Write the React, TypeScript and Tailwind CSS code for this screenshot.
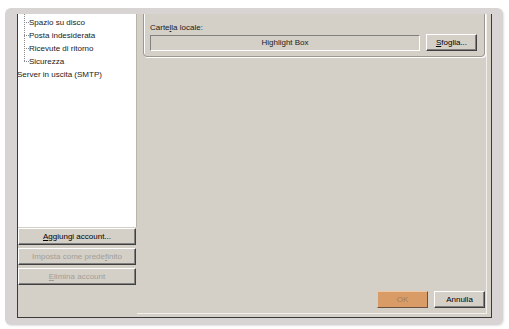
import React from 'react';

const btn =
  'h-[17px] flex items-center justify-center bg-[#d4d0c8] border border-t-white border-l-white border-b-[#404040] border-r-[#404040] shadow-[inset_-1px_-1px_0_#808080] text-[8px] leading-none';

const U = ({ c }: { c: string }) => <span className="underline underline-offset-1">{c}</span>;

export default function App() {
  const nested = ['Spazio su disco', 'Posta indesiderata', 'Ricevute di ritorno', 'Sicurezza'];
  return (
    <div className="w-[509px] h-[329px] bg-white pt-[8px] pl-[5px] font-['Liberation_Sans',Arial,sans-serif] text-[#1a1a1a]">
      <div className="w-[498px] h-[317px] rounded-[6px] bg-[#d9d4d4] pl-[12px] pt-[6px] shadow-[1px_1px_2px_rgba(0,0,0,0.12)]">
        <div className="w-[475px] h-[304px] bg-[#d4d0c8] border-x border-b border-[#3a3a3a] flex overflow-hidden">
          {/* left column: tree + account buttons */}
          <div className="w-[119px] flex flex-col">
            <div className="h-[213px] bg-white border-r border-[#b8b4ac] overflow-hidden">
              <div className="flex pl-[6px]">
                <svg width="5" height="54" className="shrink-0">
                  <line x1="0.5" y1="0" x2="0.5" y2="48" stroke="#8a8a8a" strokeDasharray="1 1" />
                  {[9, 22, 35, 48].map((y) => (
                    <line key={y} x1="0" y1={y - 0.5} x2="5" y2={y - 0.5} stroke="#8a8a8a" strokeDasharray="1 1" />
                  ))}
                </svg>
                <div className="flex flex-col pt-[2px]">
                  {nested.map((t) => (
                    <div key={t} className="h-[13px] flex items-center text-[8px] whitespace-nowrap">
                      {t}
                    </div>
                  ))}
                </div>
              </div>
              <div className="h-[13px] flex items-center text-[8px] ml-[-1px] whitespace-nowrap">
                Server in uscita (SMTP)
              </div>
            </div>
            <div className="mt-[1px] flex flex-col gap-[3px] w-[118px]">
              <div className={btn + ' border-t-[#505050] border-l-[#505050] text-black'}>
                <U c="A" />ggiungi account...
              </div>
              <div className={btn + ' text-[#a29e96]'}>
                Imposta come prede<U c="f" />inito
              </div>
              <div className={btn + ' text-[#a29e96]'}>
                <U c="E" />limina account
              </div>
            </div>
          </div>

          {/* right column */}
          <div className="w-[350px] h-[300px] flex flex-col border-r border-b border-[#f2f0ec] pl-[6px] pr-[1px]">
            <div className="mt-[-12px] h-[55px] w-[342px] rounded-[4px] border border-[#9c988f] shadow-[inset_1px_1px_0_#fff,1px_1px_0_#fff] px-[6px] pt-[21px]">
              <div className="text-[8px] leading-none h-[10px]">
                Carte<U c="l" />la locale:
              </div>
              <div className="flex items-center gap-[6px] mt-[1px]">
                <div className="w-[270px] h-[16px] border border-t-[#808080] border-l-[#808080] border-b-white border-r-white bg-[#d4d0c8] flex items-center justify-center text-[8px] text-[#222]">
                  Highlight Box
                </div>
                <div className={btn + ' w-[51px] mt-[-1px] text-black'}>
                  <U c="S" />foglia...
                </div>
              </div>
            </div>
            <div className="flex-1" />
            <div className="flex justify-end gap-[6px] pb-[5px]">
              <div className="w-[51px] h-[17px] flex items-center justify-center bg-[#d99c66] border border-t-[#f0c9a4] border-l-[#f0c9a4] border-b-[#6a5040] border-r-[#6a5040] text-[8px] text-[#a37c5c]">
                OK
              </div>
              <div className={btn + ' w-[51px] text-black'}>Annulla</div>
            </div>
          </div>
        </div>
      </div>
    </div>
  );
}
